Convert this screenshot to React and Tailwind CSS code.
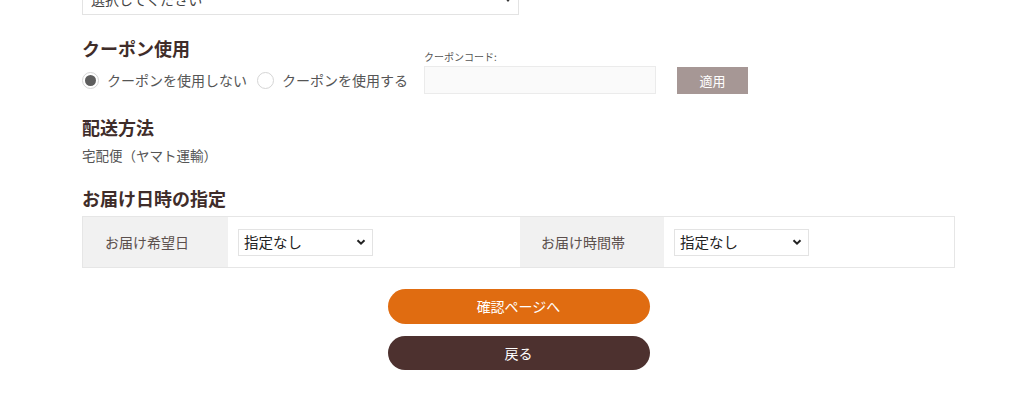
import React, { useState } from "react";

const font = { fontFamily: '"Noto Sans CJK JP", "Noto Sans", sans-serif' };

function Radio({ checked, label, onClick }) {
  return (
    <button onClick={onClick} className="flex items-center gap-[8px] text-[14px] text-[#555]">
      <span className="w-[17px] h-[17px] rounded-full border border-[#d5d5d5] bg-white flex items-center justify-center">
        {checked && <span className="w-[11px] h-[11px] rounded-full bg-[#5e5e5e]" />}
      </span>
      {label}
    </button>
  );
}

function Select() {
  return (
    <div className="w-[135px] h-[27px] border border-[#e3e3e3] bg-white flex items-center justify-between pl-[5px] pr-[6px] text-[14.5px] text-[#222]">
      <span>指定なし</span>
      <svg width="10" height="10" viewBox="0 0 10 10">
        <path d="M1.5 3.2 L5 6.7 L8.5 3.2" fill="none" stroke="#222" strokeWidth="2" />
      </svg>
    </div>
  );
}

export default function App() {
  const [useCoupon, setUseCoupon] = useState(false);

  return (
    <div className="w-[1024px] h-[399px] bg-white overflow-hidden" style={font}>
      <div className="ml-[82px] w-[873px]">
        {/* 支払い方法 select (cut off) */}
        <div className="-mt-[16px] h-[31px] w-[437px] border border-[#e3e3e3] flex items-center justify-between pl-[8px] pr-[6px] text-[14px] text-[#444]">
          <span>選択してください</span>
          <span className="w-0 h-0 border-l-[4px] border-r-[4px] border-t-[5px] border-l-transparent border-r-transparent border-t-[#333]" />
        </div>

        {/* クーポン */}
        <div className="mt-[19px] flex items-end">
          <div className="flex flex-col">
            <h2 className="h-[28px] leading-[28px] text-[18px] font-bold text-[#3f2d2a]">クーポン使用</h2>
            <div className="mt-[4px] h-[28px] flex items-center gap-[10px]">
              <Radio checked={!useCoupon} label="クーポンを使用しない" onClick={() => setUseCoupon(false)} />
              <Radio checked={useCoupon} label="クーポンを使用する" onClick={() => setUseCoupon(true)} />
            </div>
          </div>
          <div className="ml-[16px] flex flex-col">
            <label className="h-[14px] leading-[14px] text-[10px] text-[#555] mb-[2px]">クーポンコード:</label>
            <input className="w-[232px] h-[28px] bg-[#fafafa] border border-[#ebebeb] outline-none" />
          </div>
          <button className="ml-[21px] w-[71px] h-[27px] bg-[#a69795] text-white text-[13px]">適用</button>
        </div>

        {/* 配送方法 */}
        <h2 className="mt-[19px] h-[28px] leading-[28px] text-[18px] font-bold text-[#3f2d2a]">配送方法</h2>
        <p className="mt-[4px] h-[20px] leading-[20px] text-[13.5px] text-[#555]">宅配便（ヤマト運輸）</p>

        {/* お届け日時 */}
        <h2 className="mt-[19px] h-[28px] leading-[28px] text-[18px] font-bold text-[#3f2d2a]">お届け日時の指定</h2>
        <div className="mt-[4px] h-[52px] border border-[#e6e6e6] grid grid-cols-[145px_292px_144px_1fr] text-[14px]">
          <div className="bg-[#f1f1f1] flex items-center pl-[22px] text-[#5b4f4c]">お届け希望日</div>
          <div className="flex items-center pl-[10px]">
            <Select />
          </div>
          <div className="bg-[#f1f1f1] flex items-center pl-[21px] text-[#5b4f4c]">お届け時間帯</div>
          <div className="flex items-center pl-[10px]">
            <Select />
          </div>
        </div>

        {/* buttons */}
        <div className="mt-[21px] flex flex-col items-center gap-[12px]">
          <button className="w-[262px] h-[35px] rounded-full bg-[#e06c11] text-white text-[14px]">確認ページへ</button>
          <button className="w-[262px] h-[34px] rounded-full bg-[#4d312f] text-white text-[14px]">戻る</button>
        </div>
      </div>
    </div>
  );
}
